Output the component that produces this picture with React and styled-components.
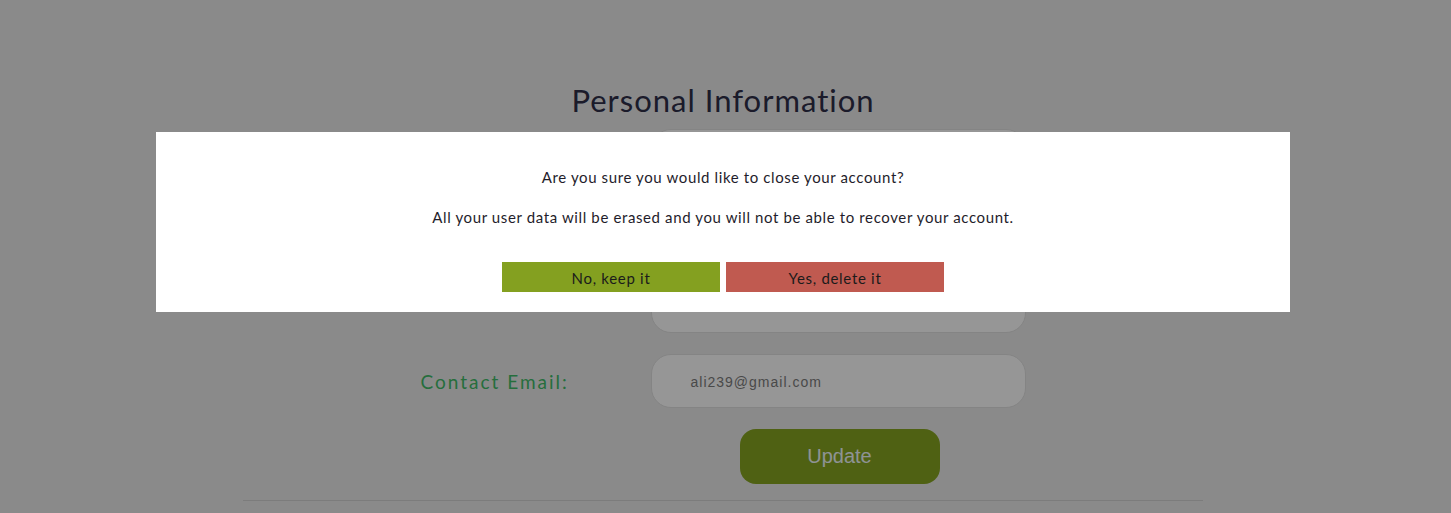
import React from 'react';
import styled, { createGlobalStyle } from 'styled-components';

const GlobalStyle = createGlobalStyle`
  html, body {
    margin: 0;
    padding: 0;
    background: #e6e6e6;
    overflow: hidden;
  }
  body {
    font-family: Lato, "Liberation Sans", sans-serif;
  }
`;

const Page = styled.div`
  position: relative;
  width: 1451px;
  height: 513px;
  padding-right: 5px;
  box-sizing: border-box;
`;

const Container = styled.div`
  width: 960px;
  margin: 0 auto;
  padding-top: 80px;
`;

const Heading = styled.h1`
  margin: 0 0 9px;
  text-align: center;
  font-family: Lato, sans-serif;
  font-weight: 400;
  font-size: 31px;
  letter-spacing: 1px;
  line-height: 40px;
  color: #2d2d46;
`;

const Form = styled.div`
  display: grid;
  grid-template-columns: 230px 375px;
  justify-content: center;
  row-gap: 21px;
  align-items: center;
`;

const Label = styled.label`
  font-family: Lato, sans-serif;
  font-size: 19px;
  letter-spacing: 2px;
  color: #3fb866;
`;

const Input = styled.div`
  height: 54px;
  box-sizing: border-box;
  border: 1px solid #dcdcdc;
  border-radius: 20px;
  background: #fbfbfb;
  display: flex;
  align-items: center;
  padding-left: 39px;
  padding-top: 2px;
  font-family: Arial, "Liberation Sans", sans-serif;
  font-size: 14px;
  letter-spacing: 1px;
  color: #7a7a7a;
`;

const UpdateButton = styled.button`
  grid-column: 2;
  justify-self: center;
  margin-left: 3px;
  width: 200px;
  height: 55px;
  border: none;
  border-radius: 16px;
  background: #84a221;
  color: #edf5f8;
  font-family: Arial, "Liberation Sans", sans-serif;
  font-size: 20px;
`;

const Divider = styled.hr`
  margin: 16px 0 0;
  border: none;
  border-top: 1px solid #cfcfcf;
`;

const Backdrop = styled.div`
  position: absolute;
  inset: 0;
  background: rgba(0, 0, 0, 0.4);
`;

const Modal = styled.div`
  position: absolute;
  left: 156px;
  top: 132px;
  width: 1134px;
  height: 180px;
  background: #ffffff;
  display: flex;
  flex-direction: column;
  align-items: center;
  padding-top: 36px;
  box-sizing: border-box;
  font-family: Lato, sans-serif;
  color: #1f1d2b;
`;

const Message = styled.p`
  margin: 0 0 21px;
  font-size: 15px;
  line-height: 19px;
  letter-spacing: 0.62px;
`;

const Actions = styled.div`
  display: flex;
  gap: 6px;
  margin-top: 14px;
`;

const ActionButton = styled.button`
  width: 218px;
  height: 30px;
  border: none;
  border-radius: 0;
  background: ${(p) => (p.$danger ? '#c05a50' : '#84a020')};
  color: #1b1b1b;
  font-family: Lato, sans-serif;
  font-size: 15px;
  letter-spacing: 0.7px;
  padding: 2px 0 0;
`;

// rows behind the modal: only their fields peek out
const fields = [
  { label: '', value: '' },
  { label: '', value: '' },
  { label: '', value: '' },
  { label: 'Contact Email:', value: 'ali239@gmail.com' },
];

export default function App() {
  return (
    <>
      <GlobalStyle />
      <Page>
        <Container>
          <Heading>Personal Information</Heading>
          <Form>
            {fields.map((f, i) => (
              <React.Fragment key={i}>
                <Label>{f.label}</Label>
                <Input>{f.value}</Input>
              </React.Fragment>
            ))}
            <UpdateButton>Update</UpdateButton>
          </Form>
          <Divider />
        </Container>
        <Backdrop />
        <Modal>
          <Message>Are you sure you would like to close your account?</Message>
          <Message>
            All your user data will be erased and you will not be able to recover your account.
          </Message>
          <Actions>
            <ActionButton>No, keep it</ActionButton>
            <ActionButton $danger>Yes, delete it</ActionButton>
          </Actions>
        </Modal>
      </Page>
    </>
  );
}
